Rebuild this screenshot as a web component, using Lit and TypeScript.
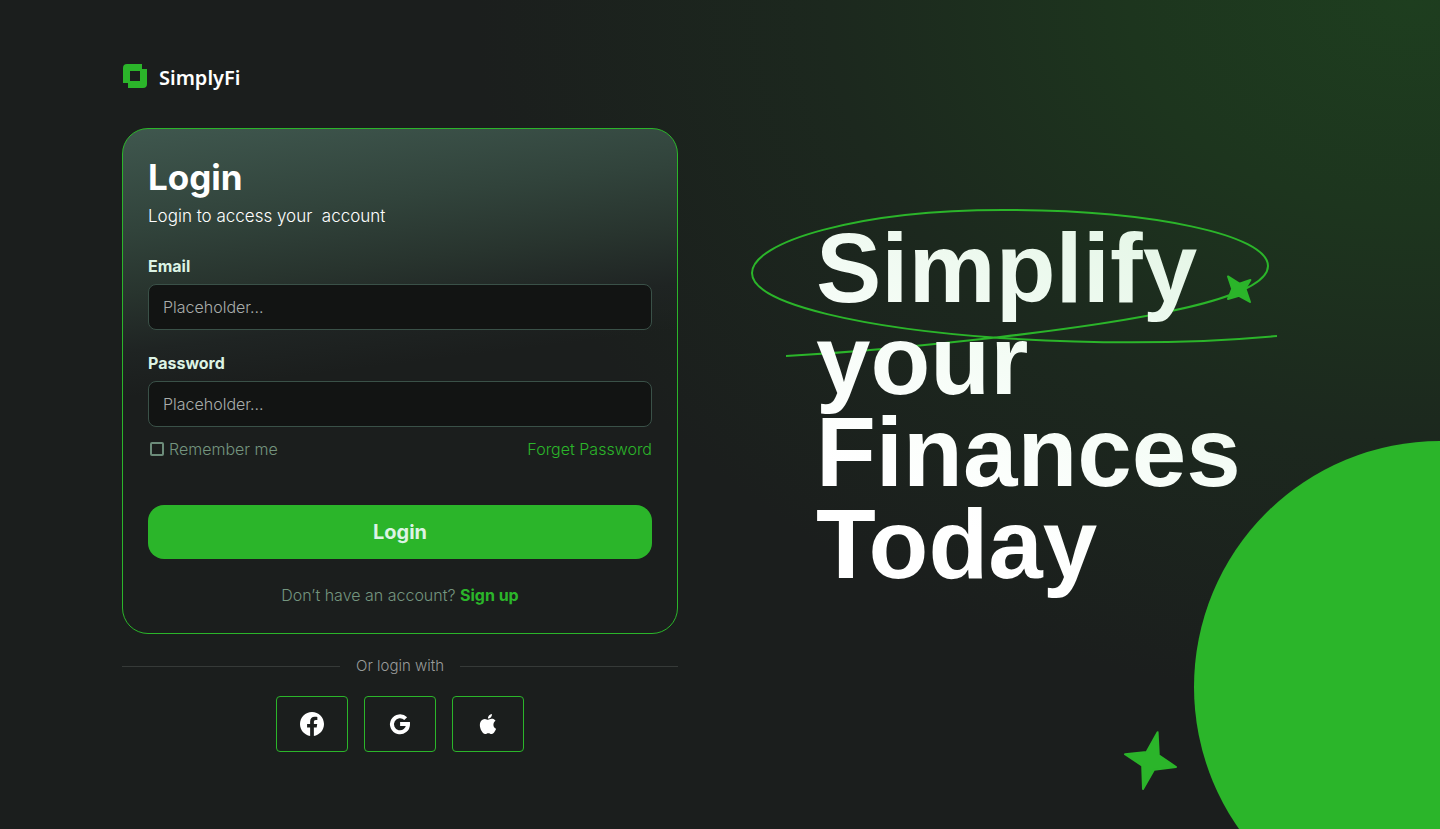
import { LitElement, html, css, svg } from "lit";
import { customElement } from "lit/decorators.js";

const icons = {
  facebook: svg`<svg width="24" height="24" viewBox="0 0 24 24" aria-hidden="true"><path fill="currentColor" d="M24 12.07C24 5.4 18.63 0 12 0S0 5.4 0 12.07C0 18.1 4.39 23.09 10.13 24v-8.44H7.08v-3.49h3.05V9.41c0-3.02 1.79-4.7 4.53-4.7 1.31 0 2.68.24 2.68.24v2.97h-1.51c-1.49 0-1.96.93-1.96 1.89v2.26h3.33l-.53 3.49h-2.8V24C19.61 23.09 24 18.1 24 12.07z"/></svg>`,
  google: svg`<svg width="24" height="24" viewBox="0 0 24 24" aria-hidden="true"><path fill="none" stroke="currentColor" stroke-width="4" d="M17.7 6.7A8 8 0 1 0 20 12.1H12.1"/></svg>`,
  apple: svg`<svg width="24" height="24" viewBox="0 0 24 24" aria-hidden="true"><path fill="currentColor" d="M18.7 19.5c-.83 1.24-1.71 2.45-3.05 2.47-1.34.03-1.77-.79-3.29-.79s-2 .77-3.27.82c-1.31.05-2.3-1.32-3.14-2.53C4.25 17 2.94 12.45 4.7 9.39c.87-1.52 2.43-2.48 4.12-2.51 1.28-.02 2.5.87 3.29.87.78 0 2.26-1.07 3.81-.91.65.03 2.47.26 3.64 1.98-.09.06-2.17 1.28-2.15 3.81.03 3.02 2.65 4.03 2.68 4.04-.03.07-.42 1.44-1.38 2.83M13 3.5c.73-.83 1.94-1.46 2.94-1.5.13 1.17-.34 2.35-1.04 3.19-.69.85-1.83 1.51-2.95 1.42-.15-1.15.41-2.35 1.05-3.11z"/></svg>`,
};

@customElement("app-root")
export class AppRoot extends LitElement {
  static styles = css`
    :host {
      display: block;
      font-family: Inter, "Liberation Sans", sans-serif;
      color: #fff;
    }
    * { box-sizing: border-box; }
    .page {
      position: relative;
      overflow: hidden;
      min-height: 100vh;
      display: grid;
      grid-template-columns: minmax(0, 556px) minmax(0, 1fr);
      column-gap: 138px;
      align-items: start;
      padding: 64px 0 64px 122px;
      background:
        radial-gradient(ellipse 65% 85% at 98% 0, #1e3e1f 0%, #1d351e 30%, #1c281e 62%, rgba(27, 30, 29, 0) 100%),
        #1b1e1d;
    }
    .brand {
      display: flex;
      align-items: center;
      gap: 12px;
      height: 24px;
      margin-bottom: 40px;
      padding-left: 1px;
    }
    .brand-name {
      font: 600 20px/28px "Noto Sans", "Open Sans", sans-serif;
      padding-top: 4px;
    }
    .card {
      display: flex;
      flex-direction: column;
      padding: 26px 25px 27px;
      border: 1px solid #2bb52a;
      border-radius: 26px;
      background: linear-gradient(173deg, #3f574e 0%, #31433b 18%, #28342e 29%, #1f2423 39%, rgba(27, 30, 29, 0) 47%);
    }
    .title { margin: 0; font-weight: 700; font-size: 35px; line-height: 44px; }
    .subtitle { margin: 5px 0 28px; font-weight: 300; font-size: 17px; line-height: 24px; white-space: pre; }
    .label { font-weight: 700; font-size: 16px; line-height: 20px; color: #dcf3e4; margin-bottom: 8px; }
    .field {
      width: 100%;
      height: 46px;
      margin: 0 0 23px;
      padding: 0 14px;
      border: 1px solid #3a5148;
      border-radius: 8px;
      background: #121413;
      color: #fff;
      font: 300 16px/20px Inter, sans-serif;
      outline: none;
    }
    .field::placeholder { color: #a9adab; opacity: 1; }
    .field:focus { border-color: #2bb52a; }
    .options {
      display: flex;
      justify-content: space-between;
      align-items: center;
      margin: -12px 0 45px;
      font-weight: 300;
      font-size: 16px;
      line-height: 22px;
      color: #74957f;
    }
    .remember { display: flex; align-items: center; gap: 5px; }
    .check {
      appearance: none;
      width: 14px;
      height: 14px;
      margin: 0 0 0 2px;
      border: 2px solid #6c8c7a;
      border-radius: 2px;
    }
    .check:checked { background: #2bb52a; }
    .link { color: #2bb52a; text-decoration: none; }
    .strong { font-weight: 700; }
    .submit {
      height: 54px;
      border: 0;
      border-radius: 16px;
      background: #2bb52a;
      color: #dcf3e4;
      font: 700 20px/24px Inter, sans-serif;
      cursor: pointer;
    }
    .signup {
      margin: 25px 0 0;
      text-align: center;
      font-weight: 300;
      font-size: 16px;
      line-height: 22px;
      color: #74957f;
    }
    .divider {
      display: flex;
      align-items: center;
      gap: 16px;
      margin: 22px 0 20px;
      font-weight: 300;
      font-size: 15px;
      line-height: 20px;
      color: #989b9a;
    }
    .divider::before, .divider::after { content: ""; flex: 1; height: 1px; background: #363a38; }
    .socials { display: flex; justify-content: center; gap: 16px; }
    .social {
      display: grid;
      place-items: center;
      width: 72px;
      height: 56px;
      padding: 0;
      border: 1px solid #2bb52a;
      border-radius: 4px;
      background: none;
      color: #fff;
      cursor: pointer;
    }
    .hero { position: relative; padding-top: 158px; }
    .headline {
      position: relative;
      width: max-content;
      margin: 0;
      padding-bottom: 10px;
      font: 700 98px/92px "Liberation Sans", sans-serif;
      background: linear-gradient(205deg, #e2f5e4 0%, #f7fdf8 50%, #fff 75%);
      -webkit-background-clip: text;
      background-clip: text;
      color: transparent;
    }
    .line { display: block; }
    .swirl { position: absolute; left: -66px; top: 144px; }
    .disc {
      position: absolute;
      right: -246px;
      bottom: -104px;
      width: 492px;
      height: 492px;
      border-radius: 50%;
      background: #2bb52a;
    }
    .star { position: absolute; right: 262px; bottom: 38px; }
  `;

  render() {
    return html`
      <main class="page">
        <div class="disc"></div>
        <svg class="star" width="56" height="62" viewBox="1122 729 56 62" aria-hidden="true">
          <path fill="#2bb52a" stroke="#2bb52a" stroke-width="2" stroke-linejoin="round"
            d="M1157.6 732.2 1158.8 755.2 1176 767 1154 769.8 1143 789 1142.2 765.6 1125 754.2 1146.6 752z" />
        </svg>

        <section>
          <header class="brand">
            <svg width="24" height="24" viewBox="0 0 24 24" aria-hidden="true">
              <path fill="#2bb52a" fill-rule="evenodd"
                d="M4 0H19V5H24V20a4 4 0 0 1-4 4H5V19H0V4a4 4 0 0 1 4-4zM7 7V17H17V7z" />
            </svg>
            <span class="brand-name">SimplyFi</span>
          </header>

          <form class="card" @submit=${(e: Event) => e.preventDefault()}>
            <h1 class="title">Login</h1>
            <p class="subtitle">Login to access your&nbsp; account</p>
            <label class="label" for="email">Email</label>
            <input class="field" id="email" type="email" placeholder="Placeholder..." />
            <label class="label" for="password">Password</label>
            <input class="field" id="password" type="password" placeholder="Placeholder..." />
            <div class="options">
              <label class="remember" for="remember"><input class="check" id="remember" type="checkbox" />Remember me</label>
              <a class="link" href="#forgot">Forget Password</a>
            </div>
            <button class="submit" type="submit">Login</button>
            <p class="signup">Don’t have an account? <a class="link strong" href="#signup">Sign up</a></p>
          </form>

          <div class="divider">Or login with</div>
          <div class="socials">
            <button class="social" type="button" aria-label="Facebook">${icons.facebook}</button>
            <button class="social" type="button" aria-label="Google">${icons.google}</button>
            <button class="social" type="button" aria-label="Apple">${icons.apple}</button>
          </div>
        </section>

        <section class="hero">
          <svg class="swirl" width="530" height="150" viewBox="750 208 530 150" fill="none" aria-hidden="true">
            <path stroke="#2bb52a" stroke-width="2"
              d="M786 356C858 352 930 345 1000 337C1130 322 1268 300 1268 266C1268 235 1152 210 1003 210C858 210 752 242 752 273C752 305 870 329 1000 338C1095 344 1190 344 1277 336" />
            <path fill="#2bb52a" stroke="#2bb52a" stroke-width="2" stroke-linejoin="round"
              d="M1228 276.4 1239.4 283.6 1250.4 280 1245.4 288.6 1250 302 1239 295.8 1228 299 1232.2 289z" />
          </svg>
          <h2 class="headline">
            <span class="line">Simplify</span><span class="line">your</span><span class="line">Finances</span><span class="line">Today</span>
          </h2>
        </section>
      </main>
    `;
  }
}
